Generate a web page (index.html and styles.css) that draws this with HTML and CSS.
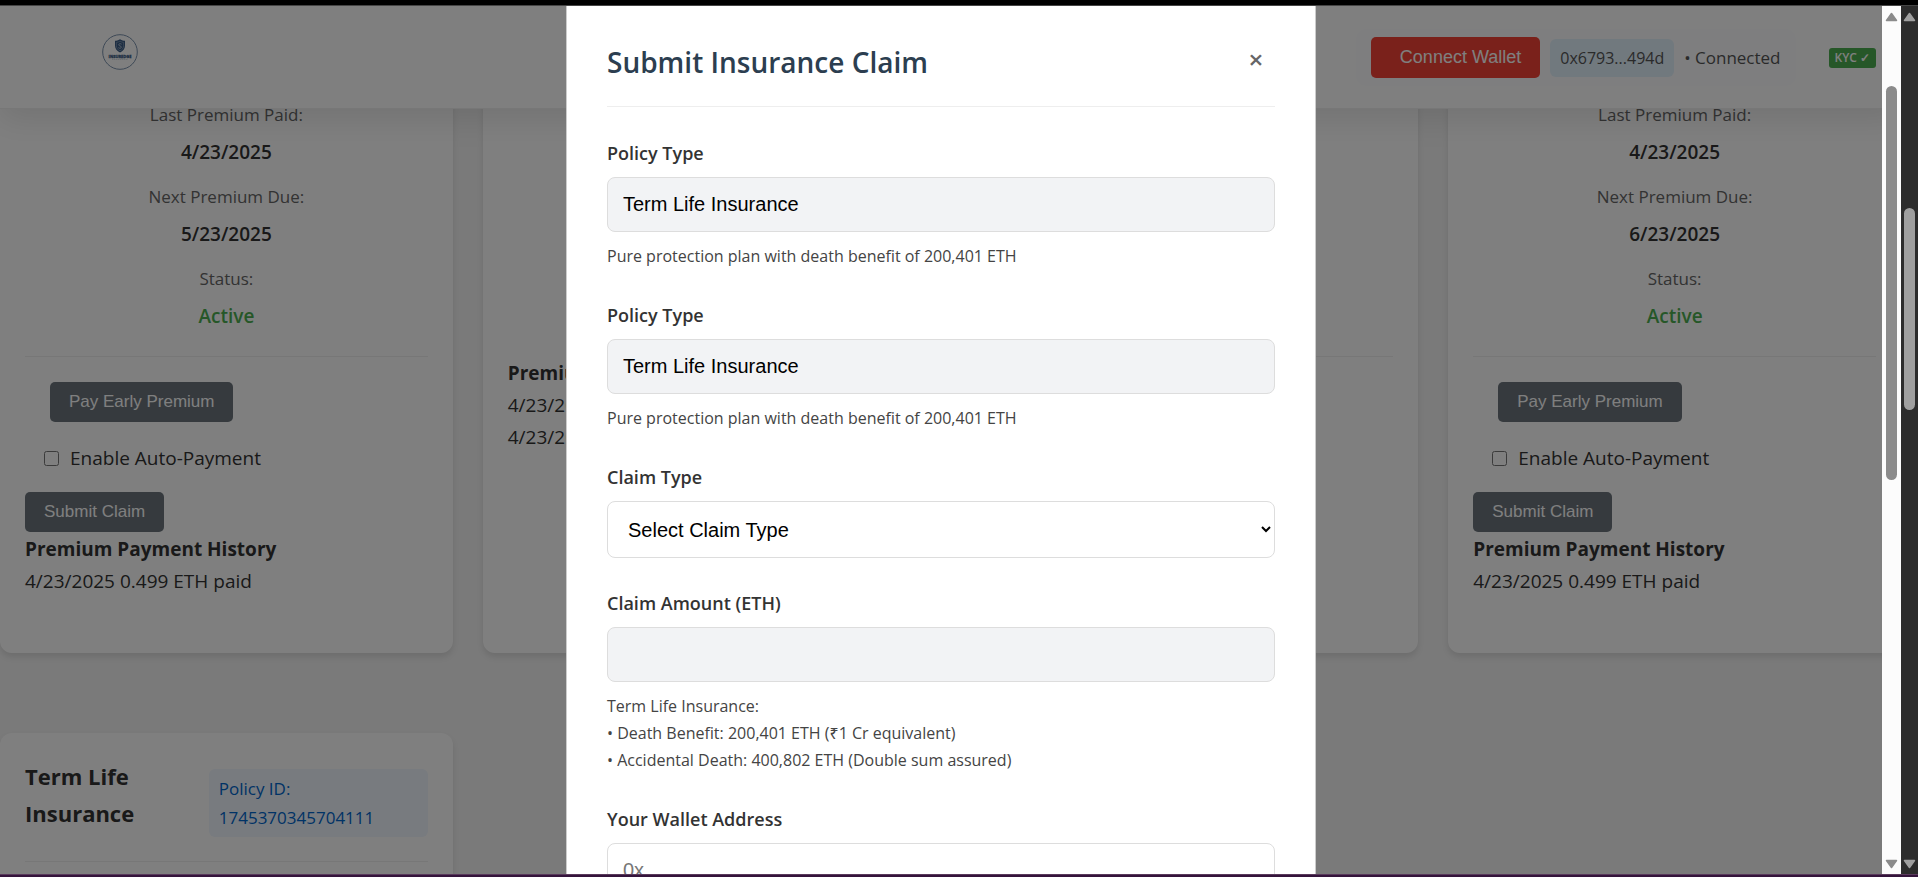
FILE: index.html
```html
<!DOCTYPE html>
<html lang="en">
<head>
<meta charset="utf-8">
<title>Submit Insurance Claim</title>
<link rel="stylesheet" href="styles.css">
</head>
<body>
<div class="frame-top"></div>
<div class="window">
  <div class="viewport">
    <header class="site-header">
      <svg class="logo" viewBox="0 0 36 36" role="img" aria-label="Logo">
        <circle cx="18" cy="18" r="17.3" fill="none" stroke="#6b84a3" stroke-width="0.9"/>
        <path d="M18 5.2 C20 6.4 21.6 6.8 23 6.8 V11.5 C23 15 21 17 18 18.4 C15 17 13 15 13 11.5 V6.8 C14.4 6.8 16 6.4 18 5.2Z" fill="#3a5c86"/>
        <path d="M18 7.2 C19.3 8 20.5 8.3 21.6 8.4 V11.6 C21.6 14.2 20.2 15.8 18 16.8 C15.8 15.8 14.4 14.2 14.4 11.6 V8.4 C15.5 8.3 16.7 8 18 7.2Z" fill="none" stroke="#a9b8ca" stroke-width="0.5"/>
        <path d="M19.6 10.2 C18.4 9.3 16.6 9.7 16.7 10.9 C16.8 12.2 19.5 11.7 19.4 13.2 C19.3 14.4 17.4 14.5 16.4 13.7" fill="none" stroke="#c3cedb" stroke-width="0.8"/>
        <text class="logo-name" x="18" y="23.5" text-anchor="middle">INSUREDGE</text>
        <path d="M10 25.3 H26" stroke="#b4bcc6" stroke-width="0.6" stroke-dasharray="1.5 0.5"/>
      </svg>
      <div class="header-right">
        <div class="wallet">
          <button class="connect" type="button">Connect Wallet</button>
          <span class="address">0x6793...494d</span>
          <span class="connected">• Connected</span>
        </div>
        <span class="kyc">KYC ✓</span>
      </div>
    </header>

    <main class="cards">
      <section class="card first-row">
        <div class="details">
          <span class="key">Last Premium Paid:</span><strong class="value">4/23/2025</strong>
          <span class="key">Next Premium Due:</span><strong class="value">5/23/2025</strong>
          <span class="key">Status:</span><strong class="value active">Active</strong>
        </div>
        <button class="btn pay" type="button">Pay Early Premium</button>
        <label class="auto"><input type="checkbox"> Enable Auto-Payment</label>
        <button class="btn" type="button">Submit Claim</button>
        <h4 class="history">Premium Payment History</h4>
        <p class="entry">4/23/2025 0.499 ETH paid</p>
      </section>
      <section class="card first-row paid">
        <h4 class="history">Premium Payment History</h4>
        <p class="entry">4/23/2025 0.499 ETH paid</p>
        <p class="entry">4/23/2025 0.499 ETH paid</p>
      </section>
      <section class="card first-row">
        <div class="details">
          <span class="key">Last Premium Paid:</span><strong class="value">4/23/2025</strong>
          <span class="key">Next Premium Due:</span><strong class="value">5/23/2025</strong>
          <span class="key">Status:</span><strong class="value active">Active</strong>
        </div>
      </section>
      <section class="card first-row">
        <div class="details">
          <span class="key">Last Premium Paid:</span><strong class="value">4/23/2025</strong>
          <span class="key">Next Premium Due:</span><strong class="value">6/23/2025</strong>
          <span class="key">Status:</span><strong class="value active">Active</strong>
        </div>
        <button class="btn pay" type="button">Pay Early Premium</button>
        <label class="auto"><input type="checkbox"> Enable Auto-Payment</label>
        <button class="btn" type="button">Submit Claim</button>
        <h4 class="history">Premium Payment History</h4>
        <p class="entry">4/23/2025 0.499 ETH paid</p>
      </section>
      <section class="card">
        <div class="policy-head">
          <h3 class="policy-name">Term Life Insurance</h3>
          <span class="policy-id">Policy ID: 1745370345704111</span>
        </div>
      </section>
    </main>

    <div class="overlay">
      <div class="overlay-body">
        <div class="modal" role="dialog" aria-labelledby="modal-title">
          <div class="modal-head">
            <h2 class="modal-title" id="modal-title">Submit Insurance Claim</h2>
            <button class="close" type="button" aria-label="Close">×</button>
          </div>
          <form>
            <div class="field">
              <label for="policy-a">Policy Type</label>
              <input class="control" id="policy-a" type="text" value="Term Life Insurance" readonly>
              <p class="help">Pure protection plan with death benefit of 200,401 ETH</p>
            </div>
            <div class="field">
              <label for="policy-b">Policy Type</label>
              <input class="control" id="policy-b" type="text" value="Term Life Insurance" readonly>
              <p class="help">Pure protection plan with death benefit of 200,401 ETH</p>
            </div>
            <div class="field">
              <label for="claim-type">Claim Type</label>
              <select class="control select" id="claim-type"><option>Select Claim Type</option></select>
            </div>
            <div class="field">
              <label for="amount">Claim Amount (ETH)</label>
              <input class="control" id="amount" type="text" readonly>
              <p class="help">Term Life Insurance:<br>• Death Benefit: 200,401 ETH (₹1 Cr equivalent)<br>• Accidental Death: 400,802 ETH (Double sum assured)</p>
            </div>
            <div class="field">
              <label for="wallet">Your Wallet Address</label>
              <input class="control" id="wallet" type="text" placeholder="0x...">
            </div>
          </form>
        </div>
      </div>
      <div class="scrollbar inner">
        <svg class="arrow" viewBox="0 0 13 10"><path d="M6.5 1.5 L11.5 8.5 H1.5Z"/></svg>
        <div class="track"><div class="thumb"></div></div>
        <svg class="arrow" viewBox="0 0 13 10"><path d="M6.5 8.5 L11.5 1.5 H1.5Z"/></svg>
      </div>
    </div>
  </div>
  <div class="scrollbar outer">
    <svg class="arrow" viewBox="0 0 13 10"><path d="M6.5 1.5 L11.5 8.5 H1.5Z"/></svg>
    <div class="track"><div class="thumb"></div></div>
    <svg class="arrow" viewBox="0 0 13 10"><path d="M6.5 8.5 L11.5 1.5 H1.5Z"/></svg>
  </div>
</div>
<div class="frame-bottom"></div>
</body>
</html>
```
FILE: styles.css
```css
* { box-sizing: border-box; }

body {
  margin: 0;
  height: 100vh;
  overflow: hidden;
  display: flex;
  flex-direction: column;
  font: 19px/32px "Open Sans", "Noto Sans", sans-serif;
  color: #333;
}

h2, h3, h4, p { margin: 0; }

.frame-top { flex: none; height: 6px; background: #000; border-bottom: 1px solid #454545; }
.frame-bottom { flex: none; height: 3px; background: #34143b; border-top: 1px solid #5a3a5c; }

.window { flex: 1; min-height: 0; display: flex; }
.viewport { flex: 1; position: relative; overflow: hidden; background: #f4f4f4; }

/* Sticky header, floats over the scrolled cards */
.site-header {
  position: absolute;
  inset: 0 0 auto 0;
  z-index: 1;
  display: flex;
  align-items: flex-start;
  justify-content: space-between;
  height: 103px;
  padding: 23px 25px 0 102px;
  background: #fff;
  border-bottom: 1px solid #eee;
  box-shadow: 0 10px 30px rgba(0, 0, 0, 0.1);
}
.logo { width: 36px; height: 36px; margin-top: 5px; }
.logo-name { font: bold 4px "Open Sans", sans-serif; fill: #3a5c86; stroke: #3a5c86; stroke-width: 0.3px; }
.header-right { display: flex; align-items: center; gap: 33px; }
.wallet {
  display: flex;
  align-items: center;
  gap: 10px;
  padding: 8px 15px;
  border-radius: 10px;
  background: #fcfdff;
}
.connect {
  height: 41px;
  padding: 0 19px 0 29px;
  border: 0;
  border-radius: 5px;
  background: #f44336;
  color: #fff;
  font: 18px "Liberation Sans", Arial, sans-serif;
}
.address {
  height: 38px;
  padding: 0 10px;
  border-radius: 6px;
  background: #e3f2fd;
  color: #555;
  font-size: 16px;
  line-height: 38px;
}
.connected { color: #555; font-size: 17px; line-height: 34px; }
.kyc {
  padding: 0 6px;
  border-radius: 3px;
  background: #4caf50;
  color: #fff;
  font-size: 12px;
  font-weight: 600;
  line-height: 20px;
}

.cards {
  display: grid;
  grid-template-columns: repeat(4, minmax(0, 1fr));
  gap: 80px 30px;
}
.card {
  padding: 25px;
  border-radius: 12px;
  background: #fff;
  box-shadow: 0 4px 6px rgba(0, 0, 0, 0.1);
}
.first-row { padding: 95px 25px 56px; }
.paid { padding-top: 350px; }
.details {
  display: flex;
  flex-direction: column;
  align-items: center;
  padding-bottom: 24px;
  border-bottom: 1px solid #eee;
}
.key { color: #666; font-size: 17px; line-height: 28px; }
.value { margin: 7px 0 15px; line-height: 32px; font-weight: 600; }
.active { margin-bottom: 0; color: #4caf50; }
.btn {
  display: block;
  height: 40px;
  padding: 0 19px;
  border: 0;
  border-radius: 5px;
  background: #6c757d;
  color: #fff;
  font: 17px "Liberation Sans", Arial, sans-serif;
}
.pay { margin: 25px; }
.pay + .auto { margin-top: -5px; }
.auto { display: flex; align-items: center; gap: 11px; height: 32px; margin: 0 0 18px 19px; }
.auto input { width: 15px; height: 15px; margin: 0; }
.history { padding-top: 1px; font-size: 19px; font-weight: 700; line-height: 32px; }
.entry { line-height: 32px; }
.policy-head {
  display: flex;
  align-items: center;
  justify-content: space-between;
  padding-bottom: 14px;
  border-bottom: 1px solid #eee;
}
.policy-name { width: 160px; margin-bottom: 15px; font-size: 22px; line-height: 37px; font-weight: 700; }
.policy-id {
  width: 219px;
  padding: 5px 10px;
  border-radius: 6px;
  background: #f0f7ff;
  color: #0066cc;
  font-size: 17px;
  line-height: 29px;
}

.overlay {
  position: absolute;
  inset: 0;
  z-index: 2;
  display: flex;
  background: rgba(0, 0, 0, 0.5);
}
.overlay-body { flex: 1; display: flex; justify-content: center; overflow: hidden; }
.modal {
  width: 750px;
  min-height: 100%;
  height: max-content;
  padding: 34px 40px 40px;
  border: solid #ccc;
  border-width: 0 1px;
  background: #fff;
}
.modal-head {
  display: flex;
  justify-content: space-between;
  align-items: flex-start;
  margin-bottom: 31px;
  padding-bottom: 21px;
  border-bottom: 1px solid #eee;
}
.modal-title { color: #2c3e50; font-size: 28px; font-weight: 600; line-height: 45px; }
.close {
  width: 38px;
  height: 38px;
  padding: 0;
  border: 0;
  background: none;
  color: #666;
  font: 600 26px/38px "Open Sans", sans-serif;
}
.field { display: flex; flex-direction: column; margin-bottom: 30px; }
.field label { margin-bottom: 9px; font-size: 18px; font-weight: 600; line-height: 30px; }
.control {
  width: 100%;
  height: 55px;
  padding: 0 15px;
  border: 1px solid #ddd;
  border-radius: 8px;
  background: #fff;
  color: #000;
  font: 20px "Liberation Sans", Arial, sans-serif;
}
.control:read-only:not(.select) { background: #f2f3f5; }
.control::placeholder { color: #777; }
.select { height: 57px; padding: 0 0 0 16px; }
.help { margin-top: 11px; color: #444; font-size: 16px; line-height: 27px; }

.scrollbar {
  flex: none;
  display: flex;
  flex-direction: column;
  align-items: center;
  padding: 6px 0 5px;
}
.arrow { width: 13px; height: 10px; stroke-width: 1.5; stroke-linejoin: round; }
.track { flex: 1; display: flex; flex-direction: column; }
.thumb { width: 11px; border-radius: 6px; }
.inner { width: 19px; background: #fcfcfc; }
.inner .arrow { fill: #8b8b8b; stroke: #8b8b8b; }
.inner .track { padding-top: 64px; }
.inner .thumb { height: 51%; min-height: 40px; background: #8b8b8b; }
.outer { width: 17px; background: #2c2c2c; }
.outer .arrow { fill: #9f9f9f; stroke: #9f9f9f; }
.outer .track { padding-top: 186px; }
.outer .thumb { height: 31%; min-height: 40px; background: #9f9f9f; }
```
